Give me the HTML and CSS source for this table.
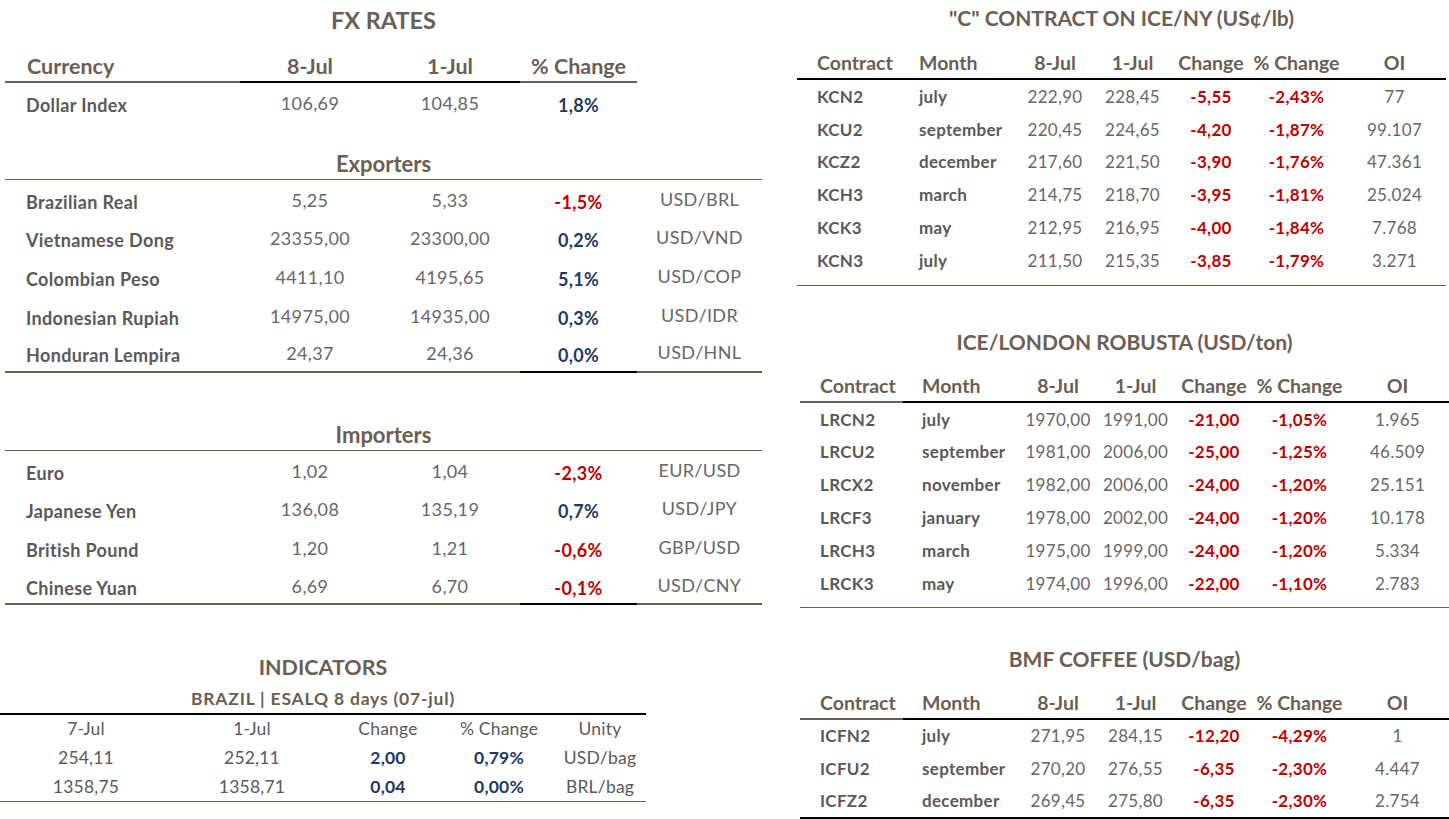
FILE: index.html
```html
<!DOCTYPE html>
<html lang="en">
<head>
<meta charset="utf-8">
<title>Market Report</title>
<link rel="stylesheet" href="styles.css">
</head>
<body>
<div class="page">
  <div class="left">
    <section class="fx">
      <h2 class="fx-title">FX RATES</h2>
      <div class="fx-head">
        <div class="hc name brown-b">Currency</div>
        <div class="hc black-b">8-Jul</div>
        <div class="hc black-b">1-Jul</div>
        <div class="hc brown-b">% Change</div>
      </div>
      <div class="fx-row dollar">
        <div class="c name">Dollar Index</div>
        <div class="c val">106,69</div>
        <div class="c val">104,85</div>
        <div class="c pct blue">1,8%</div>
        <div class="c pair"></div>
      </div>

      <div class="group">Exporters</div>
      <div class="fx-row"><div class="c name">Brazilian Real</div><div class="c val">5,25</div><div class="c val">5,33</div><div class="c pct red">-1,5%</div><div class="c pair">USD/BRL</div></div>
      <div class="fx-row"><div class="c name">Vietnamese Dong</div><div class="c val">23355,00</div><div class="c val">23300,00</div><div class="c pct blue">0,2%</div><div class="c pair">USD/VND</div></div>
      <div class="fx-row"><div class="c name">Colombian Peso</div><div class="c val">4411,10</div><div class="c val">4195,65</div><div class="c pct blue">5,1%</div><div class="c pair">USD/COP</div></div>
      <div class="fx-row"><div class="c name">Indonesian Rupiah</div><div class="c val">14975,00</div><div class="c val">14935,00</div><div class="c pct blue">0,3%</div><div class="c pair">USD/IDR</div></div>
      <div class="fx-row last"><div class="c name">Honduran Lempira</div><div class="c val">24,37</div><div class="c val">24,36</div><div class="c pct blue">0,0%</div><div class="c pair">USD/HNL</div></div>

      <div class="group tall">Importers</div>
      <div class="fx-row"><div class="c name">Euro</div><div class="c val">1,02</div><div class="c val">1,04</div><div class="c pct red">-2,3%</div><div class="c pair">EUR/USD</div></div>
      <div class="fx-row"><div class="c name">Japanese Yen</div><div class="c val">136,08</div><div class="c val">135,19</div><div class="c pct blue">0,7%</div><div class="c pair">USD/JPY</div></div>
      <div class="fx-row"><div class="c name">British Pound</div><div class="c val">1,20</div><div class="c val">1,21</div><div class="c pct red">-0,6%</div><div class="c pair">GBP/USD</div></div>
      <div class="fx-row last"><div class="c name">Chinese Yuan</div><div class="c val">6,69</div><div class="c val">6,70</div><div class="c pct red">-0,1%</div><div class="c pair">USD/CNY</div></div>
    </section>

    <section class="ind">
      <h2 class="ind-title">INDICATORS</h2>
      <div class="ind-sub">BRAZIL | ESALQ 8 days (07-jul)</div>
      <div class="ind-row head"><div>7-Jul</div><div>1-Jul</div><div>Change</div><div>% Change</div><div>Unity</div></div>
      <div class="ind-row"><div>254,11</div><div>252,11</div><div class="bb">2,00</div><div class="bb">0,79%</div><div>USD/bag</div></div>
      <div class="ind-row last"><div>1358,75</div><div>1358,71</div><div class="bb">0,04</div><div class="bb">0,00%</div><div>BRL/bag</div></div>
    </section>
  </div>

  <div class="right">
    <section class="fut kc">
      <h2 class="r-title">"C" CONTRACT ON ICE/NY (US¢/lb)</h2>
      <div class="r-head all-black">
        <div class="hc lft">Contract</div><div class="hc lft mon">Month</div><div class="hc">8-Jul</div><div class="hc">1-Jul</div><div class="hc">Change</div><div class="hc">% Change</div><div class="hc">OI</div>
      </div>
      <div class="r-rows">
        <div class="r-row"><div class="code">KCN2</div><div class="mon">july</div><div class="val">222,90</div><div class="val">228,45</div><div class="red">-5,55</div><div class="red">-2,43%</div><div class="val">77</div></div>
        <div class="r-row"><div class="code">KCU2</div><div class="mon">september</div><div class="val">220,45</div><div class="val">224,65</div><div class="red">-4,20</div><div class="red">-1,87%</div><div class="val">99.107</div></div>
        <div class="r-row"><div class="code">KCZ2</div><div class="mon">december</div><div class="val">217,60</div><div class="val">221,50</div><div class="red">-3,90</div><div class="red">-1,76%</div><div class="val">47.361</div></div>
        <div class="r-row"><div class="code">KCH3</div><div class="mon">march</div><div class="val">214,75</div><div class="val">218,70</div><div class="red">-3,95</div><div class="red">-1,81%</div><div class="val">25.024</div></div>
        <div class="r-row"><div class="code">KCK3</div><div class="mon">may</div><div class="val">212,95</div><div class="val">216,95</div><div class="red">-4,00</div><div class="red">-1,84%</div><div class="val">7.768</div></div>
        <div class="r-row"><div class="code">KCN3</div><div class="mon">july</div><div class="val">211,50</div><div class="val">215,35</div><div class="red">-3,85</div><div class="red">-1,79%</div><div class="val">3.271</div></div>
      </div>
    </section>

    <section class="fut rob shifted">
      <h2 class="r-title spaced">ICE/LONDON ROBUSTA (USD/ton)</h2>
      <div class="r-head">
        <div class="hc lft brown-b">Contract</div><div class="hc lft mon">Month</div><div class="hc">8-Jul</div><div class="hc">1-Jul</div><div class="hc">Change</div><div class="hc">% Change</div><div class="hc">OI</div>
      </div>
      <div class="r-rows rob-rows">
        <div class="r-row"><div class="code">LRCN2</div><div class="mon">july</div><div class="val">1970,00</div><div class="val">1991,00</div><div class="red">-21,00</div><div class="red">-1,05%</div><div class="val">1.965</div></div>
        <div class="r-row"><div class="code">LRCU2</div><div class="mon">september</div><div class="val">1981,00</div><div class="val">2006,00</div><div class="red">-25,00</div><div class="red">-1,25%</div><div class="val">46.509</div></div>
        <div class="r-row"><div class="code">LRCX2</div><div class="mon">november</div><div class="val">1982,00</div><div class="val">2006,00</div><div class="red">-24,00</div><div class="red">-1,20%</div><div class="val">25.151</div></div>
        <div class="r-row"><div class="code">LRCF3</div><div class="mon">january</div><div class="val">1978,00</div><div class="val">2002,00</div><div class="red">-24,00</div><div class="red">-1,20%</div><div class="val">10.178</div></div>
        <div class="r-row"><div class="code">LRCH3</div><div class="mon">march</div><div class="val">1975,00</div><div class="val">1999,00</div><div class="red">-24,00</div><div class="red">-1,20%</div><div class="val">5.334</div></div>
        <div class="r-row"><div class="code">LRCK3</div><div class="mon">may</div><div class="val">1974,00</div><div class="val">1996,00</div><div class="red">-22,00</div><div class="red">-1,10%</div><div class="val">2.783</div></div>
      </div>
    </section>

    <section class="fut bmf shifted">
      <h2 class="r-title spaced bmf-title">BMF COFFEE (USD/bag)</h2>
      <div class="r-head">
        <div class="hc lft brown-b">Contract</div><div class="hc lft mon">Month</div><div class="hc">8-Jul</div><div class="hc">1-Jul</div><div class="hc">Change</div><div class="hc">% Change</div><div class="hc">OI</div>
      </div>
      <div class="r-rows bmf-rows">
        <div class="r-row"><div class="code">ICFN2</div><div class="mon">july</div><div class="val">271,95</div><div class="val">284,15</div><div class="red">-12,20</div><div class="red">-4,29%</div><div class="val">1</div></div>
        <div class="r-row"><div class="code">ICFU2</div><div class="mon">september</div><div class="val">270,20</div><div class="val">276,55</div><div class="red">-6,35</div><div class="red">-2,30%</div><div class="val">4.447</div></div>
        <div class="r-row"><div class="code">ICFZ2</div><div class="mon">december</div><div class="val">269,45</div><div class="val">275,80</div><div class="red">-6,35</div><div class="red">-2,30%</div><div class="val">2.754</div></div>
      </div>
    </section>
  </div>
</div>
</body>
</html>
```

FILE: styles.css
```css
* { box-sizing: border-box; }

body {
  margin: 0;
  background: #ffffff;
  font-family: Lato, "Open Sans", "Liberation Sans", sans-serif;
  color: #595959;
}

.page {
  display: flex;
  width: 1449px;
  height: 819px;
  overflow: hidden;
}

/* ---------- LEFT ---------- */
.left {
  width: 762px;
  display: flex;
  flex-direction: column;
}

.fx {
  margin-left: 5px;
  width: 757px;
}

.fx-title {
  margin: 0;
  height: 50px;
  line-height: 40px;
  text-align: center;
  font-size: 23.5px;
  font-weight: 700;
  color: #6b5e53;
}

.fx-head {
  display: grid;
  grid-template-columns: 235px 140px 140px 117px;
  height: 33px;
}

.hc {
  display: flex;
  align-items: center;
  justify-content: center;
  font-weight: 700;
  color: #6b5e53;
  white-space: nowrap;
}

.fx-head .hc {
  font-size: 21.5px;
}

.fx-head .name {
  justify-content: flex-start;
  padding-left: 22px;
}

.brown-b { border-bottom: 2px solid #6b5e53; }
.black-b { border-bottom: 2px solid #000000; }

.fx-row {
  display: grid;
  grid-template-columns: 235px 140px 140px 117px 125px;
  height: 38.6px;
}

.fx-row.dollar {
  height: 44px;
}

.fx-row .c {
  display: flex;
  align-items: center;
  justify-content: center;
  font-size: 18px;
  letter-spacing: 0.35px;
  padding-top: 5px;
  white-space: nowrap;
}

.fx-row.dollar .c {
  padding-top: 0;
}

.fx-row .name {
  justify-content: flex-start;
  padding-left: 21px;
  font-weight: 700;
  color: #595959;
}

.fx-row .val {
  color: #666666;
  padding-bottom: 4px;
}

.fx-row .pct {
  font-weight: 700;
}

.fx-row .pair {
  color: #666666;
  padding-bottom: 6px;
}

.fx-row.last .c {
  border-bottom: 2px solid #6b5e53;
}

.fx-row.last .pct {
  border-bottom-color: #000000;
}

.blue { color: #1f3864; }
.red { color: #c00000; }

.group {
  height: 53px;
  display: flex;
  align-items: flex-end;
  justify-content: center;
  padding-bottom: 3px;
  line-height: 24px;
  font-size: 22px;
  font-weight: 700;
  color: #6b5e53;
  border-bottom: 1.5px solid #6b5e53;
}

.group.tall {
  height: 78px;
}

/* ---------- INDICATORS ---------- */
.ind {
  width: 646px;
}

.ind-title {
  margin: 0;
  height: 74px;
  display: flex;
  align-items: flex-end;
  justify-content: center;
  line-height: 24px;
  font-size: 21.5px;
  font-weight: 700;
  color: #6b5e53;
}

.ind-sub {
  height: 36px;
  display: flex;
  align-items: flex-end;
  justify-content: center;
  padding-bottom: 3px;
  line-height: 22px;
  font-size: 17.5px;
  letter-spacing: 0.8px;
  font-weight: 700;
  color: #6b5e53;
  border-bottom: 2px solid #000000;
}

.ind-row {
  display: grid;
  grid-template-columns: 172px 160px 112px 110px 92px;
  height: 30px;
  font-size: 17.5px;
  letter-spacing: 0.2px;
  color: #595959;
}

.ind-row.head {
  height: 27px;
}

.ind-row > div {
  display: flex;
  align-items: center;
  justify-content: center;
  white-space: nowrap;
}

.ind-row .bb {
  font-weight: 700;
  color: #1f3864;
}

.ind-row.last {
  border-bottom: 1.5px solid #6b5e53;
}

/* ---------- RIGHT ---------- */
.right {
  margin-left: 35px;
  width: 652px;
  display: flex;
  flex-direction: column;
}

.fut {
  width: 649px;
}

.fut.shifted {
  margin-left: 3px;
}

.r-title {
  margin: 0;
  height: 47px;
  line-height: 36px;
  text-align: center;
  font-size: 21px;
  font-weight: 700;
  color: #6b5e53;
  white-space: nowrap;
}

.r-title.spaced {
  height: 84px;
  display: flex;
  align-items: flex-end;
  justify-content: center;
  padding-bottom: 13px;
  line-height: 30px;
}

.r-title.bmf-title {
  height: 79px;
}

.r-head {
  display: grid;
  grid-template-columns: 103px 117px 76px 79px 78px 93px 103px;
  height: 33px;
}

.r-head .hc {
  font-size: 19.5px;
  border-bottom: 2px solid #000000;
}

.r-head .hc.brown-b {
  border-bottom-color: #6b5e53;
}

.r-head .lft {
  justify-content: flex-start;
  padding-left: 20px;
}

.r-head .lft.mon {
  padding-left: 19px;
}

.r-rows {
  padding-bottom: 8px;
  border-bottom: 1.5px solid #6b5e53;
}

.r-rows.rob-rows {
  padding-bottom: 7px;
}

.r-rows.bmf-rows {
  padding-bottom: 0;
  border-bottom: 2px solid #000000;
}

.r-row {
  display: grid;
  grid-template-columns: 103px 117px 76px 79px 78px 93px 103px;
  height: 32.8px;
  font-size: 17px;
  letter-spacing: 0.3px;
}

.bmf-rows .r-row {
  height: 32.5px;
}

.r-row > div {
  display: flex;
  align-items: center;
  justify-content: center;
  white-space: nowrap;
}

.r-row .code {
  justify-content: flex-start;
  padding-left: 20px;
  font-weight: 700;
  color: #595959;
}

.r-row .mon {
  justify-content: flex-start;
  padding-left: 19px;
  font-weight: 700;
  color: #595959;
}

.r-row .val {
  color: #666666;
}

.r-row .red {
  font-weight: 700;
}
```
